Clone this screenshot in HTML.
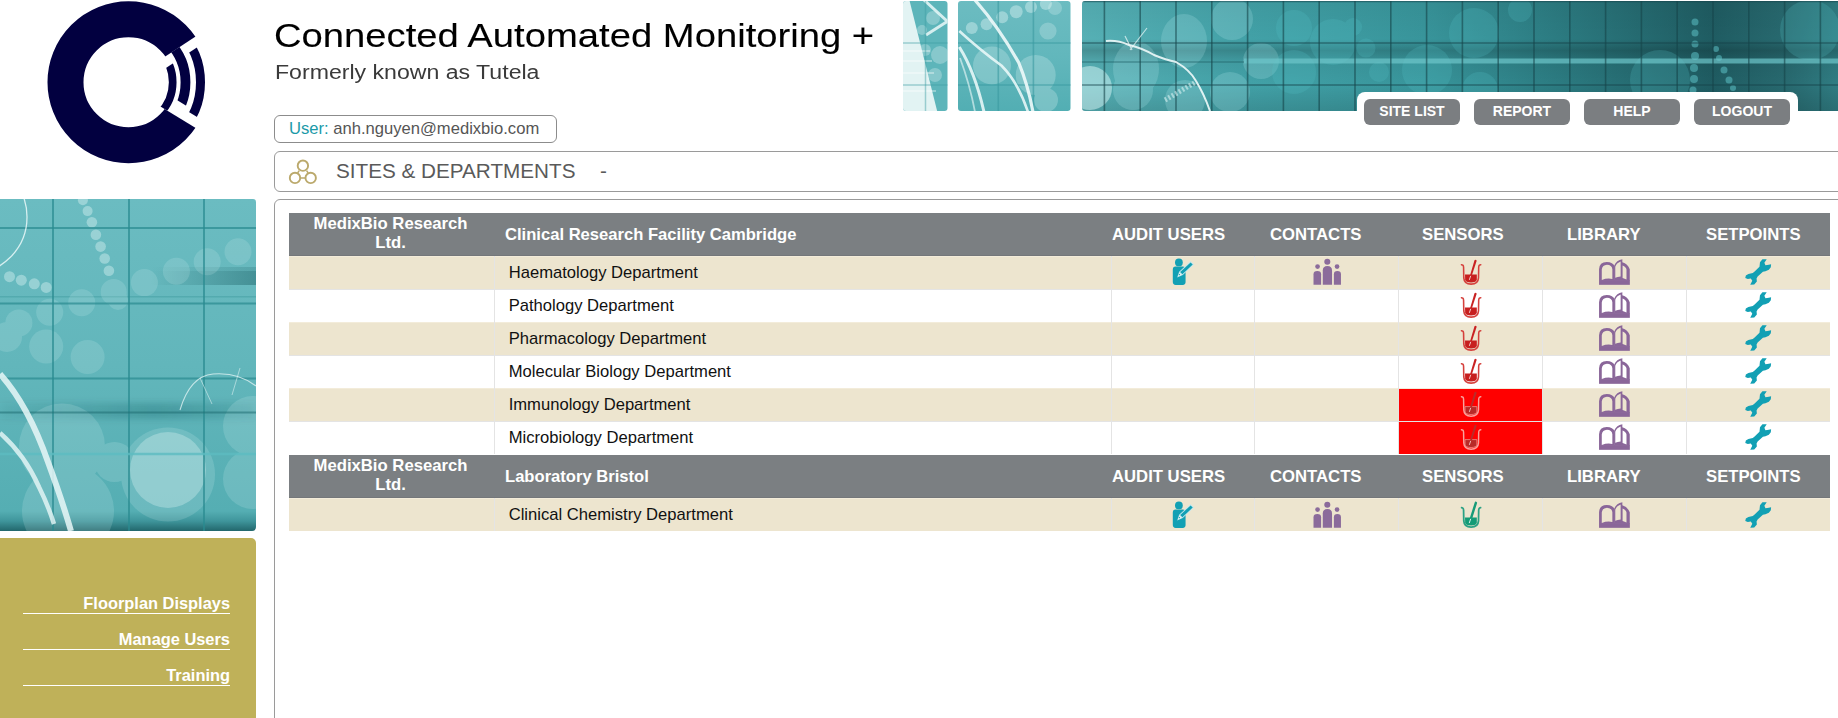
<!DOCTYPE html>
<html><head><meta charset="utf-8">
<style>
html,body{margin:0;padding:0;background:#fff;width:1838px;height:718px;overflow:hidden;position:relative;font-family:"Liberation Sans",sans-serif;}
.a{position:absolute;}
.title{left:274px;top:15.3px;font-size:34px;transform:scaleX(1.124);-webkit-text-stroke:0.1px #000;transform-origin:0 0;color:#000;white-space:nowrap;line-height:40px;}
.sub{left:274.5px;top:60.4px;font-size:20px;transform:scaleX(1.155);transform-origin:0 0;color:#3a3a3a;white-space:nowrap;line-height:24px;}
.userbox{left:274px;top:115px;width:281px;height:26px;border:1px solid #8c8c8c;border-radius:6px;box-sizing:content-box;}
.usertxt{left:289px;top:119px;font-size:16.6px;color:#555;white-space:nowrap;line-height:20px;}
.usertxt span{color:#1a9aa8;}
.sitesbox{left:274px;top:151px;width:1600px;height:39px;border:1px solid #9a9a9a;border-radius:6px;}
.sitestxt{left:336px;top:158.5px;font-size:20.7px;color:#5a5a5a;white-space:nowrap;line-height:24px;}
.contentbox{left:274px;top:199px;width:1600px;height:600px;border:1px solid #9a9a9a;border-radius:6px;}
.btn{top:99px;width:96px;height:26px;border-radius:6px;background:#7b7e81;color:#fff;font-weight:bold;font-size:14px;text-align:center;line-height:24px;}
.tab{left:1357px;top:92px;width:441px;height:30px;background:#fff;border-radius:8px 8px 0 0;}
.gold{left:0;top:538px;width:256px;height:200px;background:#bfb159;border-radius:0 5px 0 0;}
.th{color:#fff;font-weight:bold;font-size:16.7px;white-space:nowrap;}
.td{color:#111;font-size:16.6px;white-space:nowrap;}
.nav{left:23px;width:207px;text-align:right;color:#fff;font-weight:bold;font-size:16.4px;border-bottom:1px solid #fff;white-space:nowrap;line-height:20px;}
</style></head><body>

<!-- logo -->
<svg class="a" style="left:0;top:0" width="256" height="170" viewBox="0 0 256 170">
<defs>
<mask id="mw" maskUnits="userSpaceOnUse" x="0" y="0" width="256" height="170"><rect x="0" y="0" width="256" height="170" fill="#fff"/><polygon points="123.57,83.88 374.09,-81.16 379.55,240.31" fill="#000"/></mask>
<clipPath id="c1"><polygon points="133.00,89.64 383.52,-75.40 388.98,246.07"/></clipPath>
<clipPath id="c2"><polygon points="136.49,75.36 387.01,-89.68 392.47,231.80"/></clipPath>
<clipPath id="c3"><polygon points="142.23,83.56 392.75,-81.48 398.21,239.99"/></clipPath>
</defs>
<g fill="none" stroke="#020040">
<circle cx="128.5" cy="82.3" r="63" stroke-width="36" mask="url(#mw)"/>
<circle cx="128.5" cy="82.3" r="44.2" stroke-width="7.7" clip-path="url(#c1)"/>
<circle cx="128.5" cy="82.3" r="57" stroke-width="9.8" clip-path="url(#c2)"/>
<circle cx="128.5" cy="82.3" r="72" stroke-width="9" clip-path="url(#c3)"/>
</g>
</svg>

<div class="a title">Connected Automated Monitoring +</div>
<div class="a sub">Formerly known as Tutela</div>

<!-- BANNER -->
<svg class="a" style="left:900px;top:0" width="938" height="112" viewBox="900 0 938 112">
<defs>
<clipPath id="bp1"><rect x="903" y="1" width="44.5" height="110" rx="3"/></clipPath>
<clipPath id="bp2"><rect x="958" y="1" width="112.5" height="110" rx="3"/></clipPath>
<clipPath id="bp3"><rect x="1082" y="1" width="800" height="110" rx="3"/></clipPath>
<linearGradient id="g3" x1="0" y1="0" x2="1" y2="0" gradientUnits="objectBoundingBox">
 <stop offset="0" stop-color="#56b0b5"/>
 <stop offset="0.22" stop-color="#42a1a7"/>
 <stop offset="0.45" stop-color="#38959b"/>
 <stop offset="0.62" stop-color="#2c7c82"/>
 <stop offset="0.83" stop-color="#1f5c62"/>
 <stop offset="0.93" stop-color="#286a70"/>
 <stop offset="1" stop-color="#307e84"/>
</linearGradient>
<linearGradient id="g3v" x1="0" y1="0" x2="0" y2="1">
 <stop offset="0" stop-color="#000" stop-opacity="0.05"/>
 <stop offset="0.35" stop-color="#000" stop-opacity="0.0"/>
 <stop offset="0.45" stop-color="#000" stop-opacity="0.18"/>
 <stop offset="0.55" stop-color="#000" stop-opacity="0.05"/>
 <stop offset="0.75" stop-color="#000" stop-opacity="0.0"/>
 <stop offset="1" stop-color="#000" stop-opacity="0.12"/>
</linearGradient>
<linearGradient id="g2" x1="0" y1="0" x2="0" y2="1">
 <stop offset="0" stop-color="#6cbcc1"/>
 <stop offset="0.5" stop-color="#62b7bc"/>
 <stop offset="1" stop-color="#52aeb3"/>
</linearGradient>
<linearGradient id="g1" x1="0" y1="0" x2="1" y2="0">
 <stop offset="0" stop-color="#e6f4f4"/>
 <stop offset="0.45" stop-color="#b6dfe1"/>
 <stop offset="1" stop-color="#6fc0c4"/>
</linearGradient>
</defs>

<!-- panel 1 -->
<g clip-path="url(#bp1)">
 <rect x="900" y="0" width="50" height="112" fill="#5db5ba"/>
 <g fill="#e6f6f6" opacity="0.3"><circle cx="933" cy="18" r="7"/><circle cx="922" cy="30" r="5"/><circle cx="940" cy="55" r="9"/><circle cx="935" cy="75" r="7"/><circle cx="925" cy="50" r="6"/></g>
 <path d="M900,0 L909.4,0 L937.4,112 L900,112 Z" fill="#e2f3f3"/>
 <g fill="#fff" opacity="0.35"><rect x="900" y="50" width="30" height="2"/><rect x="900" y="60" width="32" height="2"/><rect x="900" y="72" width="34" height="2"/><rect x="900" y="90" width="36" height="2"/></g>
 <path d="M924,0 L948,22 M926,35 L948,21" stroke="#eaf8f8" stroke-width="3" opacity="0.85"/>
 <g stroke="#3e9ea4" stroke-opacity="0.45" stroke-width="1.5"><line x1="925.5" y1="0" x2="925.5" y2="112"/><line x1="900" y1="43" x2="950" y2="43"/><line x1="900" y1="85" x2="950" y2="85"/></g>
</g>

<!-- panel 2 -->
<g clip-path="url(#bp2)">
 <rect x="955" y="0" width="120" height="112" fill="url(#g2)"/>
 <g fill="#e6f7f7" opacity="0.25">
  <circle cx="1035.7" cy="75" r="20"/><circle cx="992" cy="65.5" r="19"/><circle cx="1048" cy="31" r="8.6"/><circle cx="1055" cy="8" r="7"/>
  <circle cx="1046" cy="100" r="12"/>
 </g>
 <g fill="#e6f7f7" opacity="0.4">
  <circle cx="971.8" cy="28" r="6"/><circle cx="986.6" cy="24.2" r="6"/><circle cx="1002.2" cy="17.2" r="6"/><circle cx="1016.2" cy="11.7" r="6.5"/><circle cx="1031" cy="7" r="6"/><circle cx="1045.9" cy="3.9" r="6"/>
 </g>
 <g stroke="#3a9aa0" stroke-opacity="0.6" stroke-width="1.6">
  <line x1="998.3" y1="0" x2="998.3" y2="112"/><line x1="1033.4" y1="0" x2="1033.4" y2="112"/>
  <line x1="955" y1="43" x2="1075" y2="43"/><line x1="955" y1="85" x2="1075" y2="85"/>
 </g>
 <g fill="none" stroke="#eefafa">
  <path d="M974.9,0 Q998,26 1018.6,62.4 Q1028,85 1033,112" stroke-width="3.2" opacity="0.9"/>
  <path d="M959.3,31 Q980,50 1001.4,65.5 Q1018,82 1028,112" stroke-width="2.6" opacity="0.85"/>
  <path d="M959.3,47 Q975,72 984,112" stroke-width="3" opacity="0.85"/>
  <path d="M960,58 Q970,85 975,112" stroke-width="1.8" opacity="0.6"/>
 </g>
</g>

<!-- panel 3 -->
<g clip-path="url(#bp3)">
 <rect x="1082" y="0" width="760" height="112" fill="url(#g3)"/>
 <rect x="1082" y="0" width="760" height="112" fill="url(#g3v)"/>
 <g fill="#bff0f2" opacity="0.2">
  <ellipse cx="1184" cy="41" rx="23" ry="27"/>
  <ellipse cx="1136" cy="69" rx="23" ry="28"/>
  <circle cx="1133" cy="90" r="20"/>
  <circle cx="1232" cy="19" r="21"/>
  <circle cx="1230" cy="92" r="20"/>
  <circle cx="1261" cy="61" r="18"/>
  <circle cx="1185" cy="100" r="20"/>
 </g>
 <g fill="#55c2c8" opacity="0.22">
  <circle cx="1294" cy="28" r="18"/>
  <circle cx="1333" cy="42" r="23"/>
  <circle cx="1353" cy="27" r="9"/>
  <circle cx="1366" cy="48" r="9.5"/>
  <circle cx="1379" cy="72" r="10"/>
  <circle cx="1427" cy="70" r="25"/>
  <circle cx="1474" cy="33" r="25"/>
  <circle cx="1294" cy="72" r="22"/>
  <circle cx="1520" cy="10" r="12"/>
  <circle cx="1480" cy="90" r="18"/>
  <circle cx="1660" cy="80" r="30"/>
  <circle cx="1810" cy="30" r="30"/>
 </g>
 <g fill="#e8ffff" opacity="0.45">
  <circle cx="1090" cy="88" r="22"/>
 </g>
 <g fill="#5cc0c5" opacity="0.55">
  <circle cx="1695" cy="22" r="3.5"/><circle cx="1695" cy="33" r="3.5"/><circle cx="1695" cy="44" r="3.5"/><circle cx="1695" cy="56" r="4"/><circle cx="1694" cy="68" r="4"/><circle cx="1694" cy="79" r="4"/><circle cx="1693" cy="90" r="3.5"/>
  <circle cx="1716" cy="49" r="3"/><circle cx="1719" cy="58" r="3"/><circle cx="1724" cy="70" r="3.5"/><circle cx="1729" cy="80" r="3.5"/><circle cx="1733" cy="88" r="3"/>
 </g>
 <rect x="1244" y="58.5" width="600" height="5" fill="#6ec6ca" opacity="0.7"/><rect x="1082" y="61" width="162" height="2" fill="#1d5c62" opacity="0.35"/>
 <g stroke="#16444a" stroke-opacity="0.55" stroke-width="1.6">
  <line x1="1082" y1="43" x2="1838" y2="43"/>
  <line x1="1082" y1="85" x2="1838" y2="85"/>
  <line x1="1082" y1="1.5" x2="1838" y2="1.5"/>
 </g>
 <g stroke="#16444a" stroke-opacity="0.6" stroke-width="1.6" id="vgrid">
  <line x1="1104.4" y1="0" x2="1104.4" y2="112"/><line x1="1140.2" y1="0" x2="1140.2" y2="112"/>
  <line x1="1176" y1="0" x2="1176" y2="112"/><line x1="1211.8" y1="0" x2="1211.8" y2="112"/>
  <line x1="1247.6" y1="0" x2="1247.6" y2="112"/><line x1="1283.4" y1="0" x2="1283.4" y2="112"/>
  <line x1="1319.2" y1="0" x2="1319.2" y2="112"/><line x1="1355" y1="0" x2="1355" y2="112"/>
  <line x1="1390.8" y1="0" x2="1390.8" y2="112"/><line x1="1426.6" y1="0" x2="1426.6" y2="112"/>
  <line x1="1462.4" y1="0" x2="1462.4" y2="112"/><line x1="1498.2" y1="0" x2="1498.2" y2="112"/>
  <line x1="1534" y1="0" x2="1534" y2="112"/><line x1="1569.8" y1="0" x2="1569.8" y2="112"/>
  <line x1="1605.6" y1="0" x2="1605.6" y2="112"/><line x1="1641.4" y1="0" x2="1641.4" y2="112"/>
  <line x1="1677.2" y1="0" x2="1677.2" y2="112"/><line x1="1713" y1="0" x2="1713" y2="112"/>
  <line x1="1748.8" y1="0" x2="1748.8" y2="112"/><line x1="1784.6" y1="0" x2="1784.6" y2="112"/>
  <line x1="1820.4" y1="0" x2="1820.4" y2="112"/>
 </g>
 <path d="M1106,41 Q1118,40 1129,45 Q1142,48 1154,55 Q1166,60 1176,62 Q1190,70 1196,81 Q1204,94 1210,111" stroke="#eefafa" stroke-width="2" fill="none" opacity="0.9"/>
 <path d="M1125,36 L1132,50 M1147,28 L1130,50" stroke="#eefafa" stroke-width="1.2" opacity="0.7"/>
 <path d="M1165,100 L1196,82" stroke="#d8f2f2" stroke-width="5" stroke-dasharray="2,2" opacity="0.6"/>
</g>
</svg>

<!-- /BANNER -->

<div class="a tab"></div>
<div class="a btn" style="left:1364px">SITE LIST</div>
<div class="a btn" style="left:1474px">REPORT</div>
<div class="a btn" style="left:1584px">HELP</div>
<div class="a btn" style="left:1694px">LOGOUT</div>

<div class="a userbox"></div>
<div class="a usertxt"><span>User:</span> anh.nguyen@medixbio.com</div>

<div class="a sitesbox"></div>
<svg class="a" style="left:286px;top:157px" width="34" height="30" viewBox="286 157 34 30">
<g fill="none" stroke="#bba96c" stroke-width="1.9">
<circle cx="302.9" cy="165.7" r="5.2"/>
<circle cx="295" cy="177.9" r="5.2"/>
<circle cx="310.7" cy="177.9" r="5.2"/>
<path d="M300.5,177.9 H305.2 M299.2,170.6 L297.6,173 M306.6,170.6 L308.2,173" stroke-width="1.5"/>
</g>
</svg>
<div class="a sitestxt">SITES &amp; DEPARTMENTS</div>
<div class="a sitestxt" style="left:600px">-</div>

<div class="a contentbox"></div>

<!-- SIDEBAR IMAGE -->
<svg class="a" style="left:0;top:199px" width="256" height="332" viewBox="0 199 256 332">
<defs>
<clipPath id="sbc"><path d="M0,199 H253 Q256,199 256,202 V527 Q256,531 252,531 H0 Z"/></clipPath>
<linearGradient id="sg" x1="0" y1="0" x2="0" y2="1">
 <stop offset="0" stop-color="#6bbcc1"/>
 <stop offset="0.5" stop-color="#62b6bb"/>
 <stop offset="0.94" stop-color="#55aeb3"/>
 <stop offset="0.97" stop-color="#3f959b"/>
 <stop offset="1" stop-color="#22676c"/>
</linearGradient>
<linearGradient id="sgh" x1="0" y1="0" x2="1" y2="0">
 <stop offset="0" stop-color="#0e4f55" stop-opacity="0"/>
 <stop offset="0.5" stop-color="#0e4f55" stop-opacity="0.2"/>
 <stop offset="1" stop-color="#0e4f55" stop-opacity="0.4"/>
</linearGradient>
<linearGradient id="sgh2" x1="0" y1="0" x2="1" y2="0">
 <stop offset="0" stop-color="#0e4f55" stop-opacity="0.05"/>
 <stop offset="0.6" stop-color="#0e4f55" stop-opacity="0.25"/>
 <stop offset="1" stop-color="#0e4f55" stop-opacity="0.1"/>
</linearGradient>
<filter id="blur1" x="-20%" y="-50%" width="140%" height="200%"><feGaussianBlur stdDeviation="3"/></filter>
</defs>
<g clip-path="url(#sbc)">
 <rect x="0" y="199" width="256" height="332" fill="url(#sg)"/>
 <rect x="150" y="271" width="110" height="14" fill="url(#sgh)"/><rect x="150" y="267" width="110" height="4" fill="url(#sgh)" opacity="0.5"/><rect x="0" y="296" width="256" height="1.5" fill="#2a8a90" opacity="0.3"/>
 <rect x="0" y="403" width="256" height="16" fill="url(#sgh2)" filter="url(#blur1)"/>
 <rect x="140" y="560" width="120" height="20" fill="url(#sgh)"/>
 <!-- circles -->
 <g fill="#d8f3f4" opacity="0.17">
  <circle cx="62" cy="446.5" r="43"/>
  <circle cx="168" cy="474.5" r="47"/>
  <circle cx="68" cy="511" r="46"/>
  <circle cx="253" cy="426" r="30"/>
  <circle cx="253" cy="479" r="30"/>
  <circle cx="114.5" cy="462" r="20"/>
  <circle cx="81.7" cy="302.7" r="13.5"/>
  <circle cx="49.7" cy="312.2" r="13.5"/>
  <circle cx="18.9" cy="322.9" r="13.5"/>
  <circle cx="7" cy="337" r="15"/>
  <circle cx="46.2" cy="346.5" r="17"/>
  <circle cx="87.6" cy="357" r="17"/>
  <circle cx="144.4" cy="282.6" r="13.5"/>
  <circle cx="176.4" cy="271.2" r="13.5"/>
  <circle cx="207.2" cy="261.8" r="13.5"/>
  <circle cx="238" cy="251.8" r="13.5"/>
  <circle cx="113.7" cy="292" r="13"/>
  <circle cx="118" cy="300" r="10"/>
 </g>
 <g fill="#e8f8f8" opacity="0.3">
  <circle cx="168" cy="470" r="38"/>
 </g>
 <g fill="#e0f6f6" opacity="0.4">
  <circle cx="82.9" cy="200.2" r="5"/><circle cx="87.6" cy="211.1" r="5"/><circle cx="91.9" cy="222.2" r="5.3"/><circle cx="95.9" cy="234.8" r="5.3"/><circle cx="100.6" cy="246.6" r="5.3"/><circle cx="104.7" cy="258.5" r="5.3"/><circle cx="108.9" cy="270.8" r="5.3"/>
  <circle cx="46.2" cy="287.4" r="5.5"/><circle cx="34.3" cy="283.8" r="5.5"/><circle cx="21.3" cy="280.2" r="5.5"/><circle cx="9.5" cy="276.7" r="5.5"/>
 </g>
 <!-- grid -->
 <g stroke="#2a8a90" stroke-width="2" stroke-opacity="0.7">
  <line x1="53" y1="199" x2="53" y2="531"/><line x1="129" y1="199" x2="129" y2="531"/><line x1="204" y1="199" x2="204" y2="531"/>
  <line x1="0" y1="228" x2="256" y2="228"/><line x1="0" y1="303.5" x2="256" y2="303.5"/><line x1="0" y1="378.5" x2="256" y2="378.5"/>
 </g>
 <line x1="0" y1="412.4" x2="256" y2="412.4" stroke="#1f6d73" stroke-width="2" stroke-opacity="0.55"/>
 <line x1="0" y1="454" x2="256" y2="454" stroke="#5dbcc1" stroke-width="2.5" stroke-opacity="0.8"/>
 <!-- white arcs -->
 <circle cx="-30" cy="217" r="57" stroke="#eaf8f8" stroke-width="1.3" fill="none" opacity="0.85"/>
 <path d="M0,374 Q28,405 48,462 Q62,500 71,531" stroke="#e8f7f7" stroke-width="6" fill="none" opacity="0.85"/>
 <path d="M0,433 Q25,455 39,487 Q48,505 54,524" stroke="#e8f7f7" stroke-width="4.5" fill="none" opacity="0.8"/>
 <path d="M180,410 Q190,376 213,374 Q238,372 256,386" stroke="#e6f6f6" stroke-width="1.1" fill="none" opacity="0.75"/>
 <path d="M200,378 L212,404 M240,368 L232,395" stroke="#e6f6f6" stroke-width="0.9" fill="none" opacity="0.6"/>
</g>
</svg>

<!-- /SIDEBAR IMAGE -->

<div class="a gold"></div>
<div class="a nav" style="top:593.3px">Floorplan Displays</div>
<div class="a nav" style="top:628.6px">Manage Users</div>
<div class="a nav" style="top:665px">Training</div>

<!-- TABLE -->
<svg width="0" height="0" style="position:absolute">
<defs>
<g id="i-audit">
 <circle cx="285" cy="152" r="80" fill="#12a0b4"/>
 <rect x="160" y="238" width="262" height="375" rx="58" fill="#12a0b4"/>
 <path d="M250,460 L290,345 L525,125 L595,195 L365,410 Z" fill="#c6e7ec"/>
 <path d="M312,350 L525,152 L568,196 L356,394 Z" fill="#12a0b4"/>
 <path d="M272,438 L300,365 L342,405 Z" fill="#e0f2f4"/>
 <circle cx="296" cy="402" r="14" fill="#12a0b4"/>
</g>
<g id="i-contacts" fill="#8b6b9b">
 <circle cx="355" cy="140" r="62"/>
 <path d="M262,610 V320 Q262,225 357,225 Q452,225 452,320 V610 Z"/>
 <circle cx="155" cy="238" r="48"/>
 <path d="M72,610 V395 Q72,330 150,330 Q228,330 228,395 V610 Z"/>
 <circle cx="555" cy="238" r="48"/>
 <path d="M490,610 V395 Q490,330 562,330 Q635,330 635,395 V610 Z"/>
</g>
<g id="i-sensor">
 <path d="M120,200 Q172,192 176,250 L180,470 Q188,598 330,598 Q474,598 482,470 L486,250 Q490,192 540,200" fill="none" stroke="#d5403c" stroke-width="32"/>
 <path d="M205,402 H448 V498 Q442,565 330,565 Q213,565 208,498 Z" fill="#c71f1f"/>
 <path d="M400,110 Q425,85 445,120 L318,505 L285,495 Z" fill="#c92222"/>
 <line x1="322" y1="428" x2="294" y2="510" stroke="#f6dede" stroke-width="18"/>
</g>
<g id="i-sensor-r">
 <path d="M120,200 Q172,192 176,250 L180,470 Q188,598 330,598 Q474,598 482,470 L486,250 Q490,192 540,200" fill="none" stroke="#f7b4ae" stroke-width="30" opacity=".9"/>
 <path d="M205,402 H448 V498 Q442,565 330,565 Q213,565 208,498 Z" fill="#b82a28" stroke="#f2a29c" stroke-width="14"/>
 <path d="M400,110 Q425,85 445,120 L318,505 L285,495 Z" fill="#b92c2a"/>
 <line x1="322" y1="428" x2="294" y2="510" stroke="#f6d0cc" stroke-width="18"/>
</g>
<g id="i-sensor-g">
 <path d="M120,200 Q172,192 176,250 L180,470 Q188,598 330,598 Q474,598 482,470 L486,250 Q490,192 540,200" fill="none" stroke="#2aa184" stroke-width="36"/>
 <path d="M205,402 H448 V498 Q442,565 330,565 Q213,565 208,498 Z" fill="#139b76"/>
 <line x1="428" y1="100" x2="300" y2="505" stroke="#169b78" stroke-width="50" stroke-linecap="round"/>
 <line x1="322" y1="428" x2="292" y2="515" stroke="#dff2ec" stroke-width="20"/>
</g>
<g id="i-lib" fill="#8a6699" fill-rule="evenodd">
 <rect x="42" y="515" width="632" height="97"/>
 <path d="M42,530 V290 Q50,148 200,145 Q330,150 362,230 V530 Z M98,512 V300 Q110,205 205,200 Q305,205 315,290 V492 Q210,470 98,512 Z"/>
 <path d="M352,530 V222 Q400,100 520,85 V150 Q630,185 672,292 V530 Z M375,468 V242 Q400,162 485,132 V440 Q420,450 375,468 Z M525,215 Q595,240 605,300 V505 Q570,482 525,470 Z"/>
</g>
<g id="i-set">
 <path d="M410,150 L460,88 L548,85 L500,160 L522,212 L590,198 L638,192 L632,252 L592,302 L522,332 L470,342 L362,440 L340,482 L346,542 L292,606 L210,610 L252,530 L222,480 L160,492 L108,470 L120,420 L172,390 L262,370 L300,340 L400,240 Z" fill="#12a0b4"/>
</g>
</defs>
</svg>

<div class="a" style="left:289px;top:213px;width:1541px;height:43px;background:#7b7f82;"></div>
<div class="a" style="left:289px;top:255px;width:1541px;height:1px;background:#74777a;"></div>
<div class="a th" style="left:288px;top:214.3px;width:205px;text-align:center;line-height:19px;">MedixBio Research<br>Ltd.</div>
<div class="a th" style="left:505px;top:221px;line-height:27px;font-size:16.6px">Clinical Research Facility Cambridge</div>
<div class="a th" style="left:1112px;top:221px;line-height:27px">AUDIT USERS</div>
<div class="a th" style="left:1270px;top:221px;line-height:27px">CONTACTS</div>
<div class="a th" style="left:1422px;top:221px;line-height:27px">SENSORS</div>
<div class="a th" style="left:1567px;top:221px;line-height:27px">LIBRARY</div>
<div class="a th" style="left:1706px;top:221px;line-height:27px">SETPOINTS</div>
<div class="a" style="left:289px;top:256px;width:1541px;height:1px;background:#f3ecda;"></div>
<div class="a" style="left:289px;top:257px;width:1541px;height:32px;background:#ede5cf;"></div>
<div class="a" style="left:494px;top:256px;width:1px;height:33px;background:#e4e4e4;"></div>
<div class="a" style="left:1111px;top:256px;width:1px;height:33px;background:#e4e4e4;"></div>
<div class="a" style="left:1254px;top:256px;width:1px;height:33px;background:#e4e4e4;"></div>
<div class="a" style="left:1398px;top:256px;width:1px;height:33px;background:#e4e4e4;"></div>
<div class="a" style="left:1542px;top:256px;width:1px;height:33px;background:#e4e4e4;"></div>
<div class="a" style="left:1686px;top:256px;width:1px;height:33px;background:#e4e4e4;"></div>
<div class="a td" style="left:508.7px;top:257px;line-height:32px">Haematology Department</div>
<svg class="a" style="left:1165px;top:255px" width="35" height="35" viewBox="0 0 718 718"><use href="#i-audit"/></svg>
<svg class="a" style="left:1310px;top:255px" width="35" height="35" viewBox="0 0 718 718"><use href="#i-contacts"/></svg>
<svg class="a" style="left:1455px;top:255px" width="35" height="35" viewBox="0 0 718 718"><use href="#i-sensor"/></svg>
<svg class="a" style="left:1597px;top:255px" width="35" height="35" viewBox="0 0 718 718"><use href="#i-lib"/></svg>
<svg class="a" style="left:1740px;top:255px" width="35" height="35" viewBox="0 0 718 718"><use href="#i-set"/></svg>
<div class="a" style="left:289px;top:289px;width:1541px;height:1px;background:#e4e4e4;"></div>
<div class="a" style="left:289px;top:290px;width:1541px;height:32px;background:#fff;"></div>
<div class="a" style="left:494px;top:289px;width:1px;height:33px;background:#e4e4e4;"></div>
<div class="a" style="left:1111px;top:289px;width:1px;height:33px;background:#e4e4e4;"></div>
<div class="a" style="left:1254px;top:289px;width:1px;height:33px;background:#e4e4e4;"></div>
<div class="a" style="left:1398px;top:289px;width:1px;height:33px;background:#e4e4e4;"></div>
<div class="a" style="left:1542px;top:289px;width:1px;height:33px;background:#e4e4e4;"></div>
<div class="a" style="left:1686px;top:289px;width:1px;height:33px;background:#e4e4e4;"></div>
<div class="a td" style="left:508.7px;top:290px;line-height:32px">Pathology Department</div>
<svg class="a" style="left:1455px;top:288px" width="35" height="35" viewBox="0 0 718 718"><use href="#i-sensor"/></svg>
<svg class="a" style="left:1597px;top:288px" width="35" height="35" viewBox="0 0 718 718"><use href="#i-lib"/></svg>
<svg class="a" style="left:1740px;top:288px" width="35" height="35" viewBox="0 0 718 718"><use href="#i-set"/></svg>
<div class="a" style="left:289px;top:322px;width:1541px;height:1px;background:#f3ecda;"></div>
<div class="a" style="left:289px;top:323px;width:1541px;height:32px;background:#ede5cf;"></div>
<div class="a" style="left:494px;top:322px;width:1px;height:33px;background:#e4e4e4;"></div>
<div class="a" style="left:1111px;top:322px;width:1px;height:33px;background:#e4e4e4;"></div>
<div class="a" style="left:1254px;top:322px;width:1px;height:33px;background:#e4e4e4;"></div>
<div class="a" style="left:1398px;top:322px;width:1px;height:33px;background:#e4e4e4;"></div>
<div class="a" style="left:1542px;top:322px;width:1px;height:33px;background:#e4e4e4;"></div>
<div class="a" style="left:1686px;top:322px;width:1px;height:33px;background:#e4e4e4;"></div>
<div class="a td" style="left:508.7px;top:323px;line-height:32px">Pharmacology Department</div>
<svg class="a" style="left:1455px;top:321px" width="35" height="35" viewBox="0 0 718 718"><use href="#i-sensor"/></svg>
<svg class="a" style="left:1597px;top:321px" width="35" height="35" viewBox="0 0 718 718"><use href="#i-lib"/></svg>
<svg class="a" style="left:1740px;top:321px" width="35" height="35" viewBox="0 0 718 718"><use href="#i-set"/></svg>
<div class="a" style="left:289px;top:355px;width:1541px;height:1px;background:#e4e4e4;"></div>
<div class="a" style="left:289px;top:356px;width:1541px;height:32px;background:#fff;"></div>
<div class="a" style="left:494px;top:355px;width:1px;height:33px;background:#e4e4e4;"></div>
<div class="a" style="left:1111px;top:355px;width:1px;height:33px;background:#e4e4e4;"></div>
<div class="a" style="left:1254px;top:355px;width:1px;height:33px;background:#e4e4e4;"></div>
<div class="a" style="left:1398px;top:355px;width:1px;height:33px;background:#e4e4e4;"></div>
<div class="a" style="left:1542px;top:355px;width:1px;height:33px;background:#e4e4e4;"></div>
<div class="a" style="left:1686px;top:355px;width:1px;height:33px;background:#e4e4e4;"></div>
<div class="a td" style="left:508.7px;top:356px;line-height:32px">Molecular Biology Department</div>
<svg class="a" style="left:1455px;top:354px" width="35" height="35" viewBox="0 0 718 718"><use href="#i-sensor"/></svg>
<svg class="a" style="left:1597px;top:354px" width="35" height="35" viewBox="0 0 718 718"><use href="#i-lib"/></svg>
<svg class="a" style="left:1740px;top:354px" width="35" height="35" viewBox="0 0 718 718"><use href="#i-set"/></svg>
<div class="a" style="left:289px;top:388px;width:1541px;height:1px;background:#f3ecda;"></div>
<div class="a" style="left:289px;top:389px;width:1541px;height:32px;background:#ede5cf;"></div>
<div class="a" style="left:1399px;top:389px;width:143px;height:32px;background:#ff0000;"></div>
<div class="a" style="left:494px;top:388px;width:1px;height:33px;background:#e4e4e4;"></div>
<div class="a" style="left:1111px;top:388px;width:1px;height:33px;background:#e4e4e4;"></div>
<div class="a" style="left:1254px;top:388px;width:1px;height:33px;background:#e4e4e4;"></div>
<div class="a" style="left:1398px;top:388px;width:1px;height:33px;background:#e4e4e4;"></div>
<div class="a" style="left:1542px;top:388px;width:1px;height:33px;background:#e4e4e4;"></div>
<div class="a" style="left:1686px;top:388px;width:1px;height:33px;background:#e4e4e4;"></div>
<div class="a td" style="left:508.7px;top:389px;line-height:32px">Immunology Department</div>
<svg class="a" style="left:1455px;top:387px" width="35" height="35" viewBox="0 0 718 718"><use href="#i-sensor-r"/></svg>
<svg class="a" style="left:1597px;top:387px" width="35" height="35" viewBox="0 0 718 718"><use href="#i-lib"/></svg>
<svg class="a" style="left:1740px;top:387px" width="35" height="35" viewBox="0 0 718 718"><use href="#i-set"/></svg>
<div class="a" style="left:289px;top:421px;width:1541px;height:1px;background:#e4e4e4;"></div>
<div class="a" style="left:289px;top:422px;width:1541px;height:32px;background:#fff;"></div>
<div class="a" style="left:1399px;top:422px;width:143px;height:32px;background:#ff0000;"></div>
<div class="a" style="left:494px;top:421px;width:1px;height:33px;background:#e4e4e4;"></div>
<div class="a" style="left:1111px;top:421px;width:1px;height:33px;background:#e4e4e4;"></div>
<div class="a" style="left:1254px;top:421px;width:1px;height:33px;background:#e4e4e4;"></div>
<div class="a" style="left:1398px;top:421px;width:1px;height:33px;background:#e4e4e4;"></div>
<div class="a" style="left:1542px;top:421px;width:1px;height:33px;background:#e4e4e4;"></div>
<div class="a" style="left:1686px;top:421px;width:1px;height:33px;background:#e4e4e4;"></div>
<div class="a td" style="left:508.7px;top:422px;line-height:32px">Microbiology Department</div>
<svg class="a" style="left:1455px;top:420px" width="35" height="35" viewBox="0 0 718 718"><use href="#i-sensor-r"/></svg>
<svg class="a" style="left:1597px;top:420px" width="35" height="35" viewBox="0 0 718 718"><use href="#i-lib"/></svg>
<svg class="a" style="left:1740px;top:420px" width="35" height="35" viewBox="0 0 718 718"><use href="#i-set"/></svg>
<div class="a" style="left:289px;top:455px;width:1541px;height:43px;background:#7b7f82;"></div>
<div class="a" style="left:289px;top:497px;width:1541px;height:1px;background:#74777a;"></div>
<div class="a th" style="left:288px;top:456.3px;width:205px;text-align:center;line-height:19px;">MedixBio Research<br>Ltd.</div>
<div class="a th" style="left:505px;top:463px;line-height:27px;font-size:16.6px">Laboratory Bristol</div>
<div class="a th" style="left:1112px;top:463px;line-height:27px">AUDIT USERS</div>
<div class="a th" style="left:1270px;top:463px;line-height:27px">CONTACTS</div>
<div class="a th" style="left:1422px;top:463px;line-height:27px">SENSORS</div>
<div class="a th" style="left:1567px;top:463px;line-height:27px">LIBRARY</div>
<div class="a th" style="left:1706px;top:463px;line-height:27px">SETPOINTS</div>
<div class="a" style="left:289px;top:498px;width:1541px;height:1px;background:#f3ecda;"></div>
<div class="a" style="left:289px;top:499px;width:1541px;height:32px;background:#ede5cf;"></div>
<div class="a" style="left:494px;top:498px;width:1px;height:33px;background:#e4e4e4;"></div>
<div class="a" style="left:1111px;top:498px;width:1px;height:33px;background:#e4e4e4;"></div>
<div class="a" style="left:1254px;top:498px;width:1px;height:33px;background:#e4e4e4;"></div>
<div class="a" style="left:1398px;top:498px;width:1px;height:33px;background:#e4e4e4;"></div>
<div class="a" style="left:1542px;top:498px;width:1px;height:33px;background:#e4e4e4;"></div>
<div class="a" style="left:1686px;top:498px;width:1px;height:33px;background:#e4e4e4;"></div>
<div class="a td" style="left:508.7px;top:499px;line-height:32px">Clinical Chemistry Department</div>
<svg class="a" style="left:1165px;top:498px" width="35" height="35" viewBox="0 0 718 718"><use href="#i-audit"/></svg>
<svg class="a" style="left:1310px;top:498px" width="35" height="35" viewBox="0 0 718 718"><use href="#i-contacts"/></svg>
<svg class="a" style="left:1455px;top:498px" width="35" height="35" viewBox="0 0 718 718"><use href="#i-sensor-g"/></svg>
<svg class="a" style="left:1597px;top:498px" width="35" height="35" viewBox="0 0 718 718"><use href="#i-lib"/></svg>
<svg class="a" style="left:1740px;top:498px" width="35" height="35" viewBox="0 0 718 718"><use href="#i-set"/></svg>
<!-- /TABLE -->

</body></html>
